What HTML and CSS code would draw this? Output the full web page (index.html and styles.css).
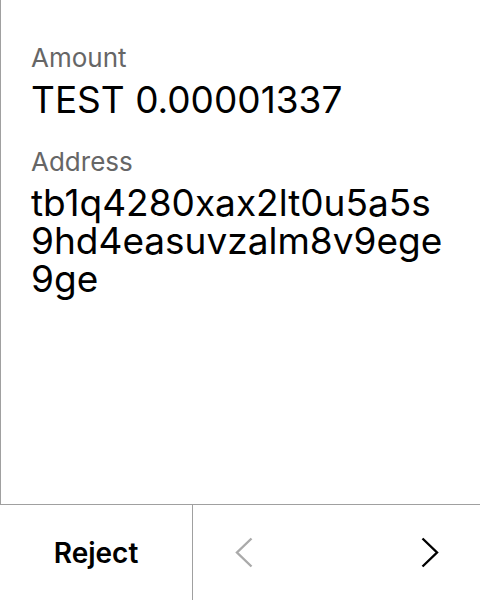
FILE: index.html
```html
<!DOCTYPE html>
<html>
<head>
<meta charset="utf-8">
<link rel="stylesheet" href="styles.css">
</head>
<body>
<div class="screen">
  <div class="content">
    <div class="field">
      <div class="label">Amount</div>
      <div class="value">TEST 0.00001337</div>
    </div>
    <div class="field">
      <div class="label">Address</div>
      <div class="value address">tb1q4280xax2lt0u5a5s9hd4easuvzalm8v9ege9ge</div>
    </div>
  </div>
  <div class="nav">
    <div class="reject">Reject</div>
    <div class="arrows">
      <svg class="chev disabled" width="18" height="31" viewBox="0 0 18 31"><polyline points="16.5,1.5 2,15.5 16.5,29.5" fill="none" stroke="currentColor" stroke-width="2.4"/></svg>
      <svg class="chev" width="18" height="31" viewBox="0 0 18 31"><polyline points="1.5,1.5 16,15.5 1.5,29.5" fill="none" stroke="currentColor" stroke-width="2.4"/></svg>
    </div>
  </div>
</div>
</body>
</html>
```
FILE: styles.css
```css
html, body {
  margin: 0;
  padding: 0;
  background: #fff;
}
.screen {
  width: 480px;
  height: 600px;
  display: flex;
  flex-direction: column;
  font-family: Inter, "Noto Sans", sans-serif;
  color: #000;
}
.content {
  flex: 1;
  border-left: 1px solid #a0a0a0;
  border-bottom: 1px solid #a0a0a0;
  padding: 42px 33px 0 30px;
  display: flex;
  flex-direction: column;
  gap: 27px;
}
.label {
  font-size: 26px;
  color: #666;
  line-height: 31px;
}
.value {
  font-size: 37px;
  line-height: 38px;
  margin-top: 8px;
}
.address {
  word-break: break-all;
  margin-top: 7px;
}
.nav {
  height: 95px;
  display: flex;
}
.reject {
  width: 192px;
  border-right: 1px solid #a0a0a0;
  display: flex;
  align-items: center;
  justify-content: center;
  font-size: 28px;
  font-weight: 600;
}
.arrows {
  flex: 1;
  display: flex;
  align-items: center;
  justify-content: space-between;
  padding: 0 41px 0 42px;
}
.chev {
  color: #000;
  display: block;
}
.chev.disabled {
  color: #aaa;
}
```
